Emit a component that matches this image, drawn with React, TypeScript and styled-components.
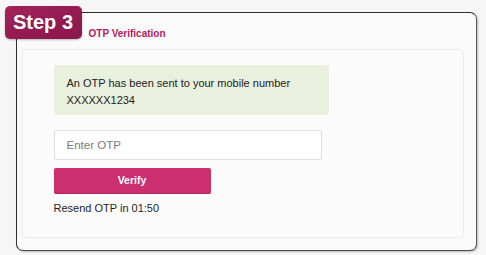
import React from "react";
import styled, { createGlobalStyle } from "styled-components";

const GlobalStyle = createGlobalStyle`
  html, body {
    margin: 0;
    padding: 0;
    background: #f6f6f6;
    font-family: "Liberation Sans", Arial, sans-serif;
  }
  * { box-sizing: border-box; }
`;

const Page = styled.div`
  width: 486px;
  height: 255px;
  overflow: hidden;
  display: flex;
  flex-direction: column;
`;

const TopStrip = styled.div`
  height: 12px;
  overflow: hidden;
`;

const CutTitle = styled.div`
  margin-top: -21px;
  font-size: 18px;
  line-height: 20px;
  font-weight: 700;
  color: #555;
  white-space: nowrap;
`;

const Frame = styled.section`
  position: relative;
  margin-left: 16px;
  width: 461px;
  height: 239px;
  border: 1.5px solid #2e2e2e;
  border-right-color: #5a5a5a;
  border-bottom-color: #4a4a4a;
  border-radius: 7px;
  background: #fafafa;
  box-shadow: 1px 1px 2px rgba(0, 0, 0, 0.25);
  display: flex;
  flex-direction: column;
  padding: 0 12.5px 12.5px 4.5px;
`;

const StepBadge = styled.div`
  position: absolute;
  left: -12.5px;
  top: -7.5px;
  width: 77px;
  height: 33px;
  border-radius: 5px;
  background: linear-gradient(160deg, #a3235b 0%, #921a50 60%, #8a174b 100%);
  box-shadow: 0 1px 2px rgba(0, 0, 0, 0.25);
  color: #ffffff;
  font-size: 20px;
  font-weight: 700;
  display: flex;
  align-items: center;
  justify-content: center;
`;

const Header = styled.div`
  height: 35.5px;
  padding: 15px 0 0 67px;
  font-size: 10px;
  line-height: 12px;
  font-weight: 700;
  color: #b41c5c;
`;

const Card = styled.div`
  flex: 1;
  border: 1px solid #ebebeb;
  border-radius: 4px;
  background: #fbfbfb;
  padding: 15px 0 0 31px;
  display: flex;
  flex-direction: column;
  align-items: flex-start;
`;

const Alert = styled.div`
  width: 275px;
  height: 50px;
  border-radius: 3px;
  background: #e9f0dd;
  padding: 10px 13px 0 13px;
  font-size: 11px;
  line-height: 17px;
  color: #222;
`;

const OtpInput = styled.input`
  margin-top: 15px;
  width: 268px;
  height: 30px;
  border: 1px solid #dedede;
  border-radius: 2px;
  background: #ffffff;
  padding: 0 12px;
  font-family: "Liberation Sans", Arial, sans-serif;
  font-size: 11.5px;
  color: #333;
  outline: none;
  &::placeholder {
    color: #7a7a7a;
  }
`;

const VerifyButton = styled.button`
  margin-top: 8px;
  width: 157px;
  height: 26px;
  border: none;
  border-bottom: 1px solid #b02560;
  border-radius: 2px;
  background: #cb2f6d;
  color: #ffffff;
  font-family: "Liberation Sans", Arial, sans-serif;
  font-size: 10.5px;
  font-weight: 700;
  cursor: pointer;
`;

const Resend = styled.div`
  margin-top: 8px;
  font-size: 11px;
  line-height: 13px;
  color: #1e1e1e;
`;

export default function App() {
  return (
    <>
      <GlobalStyle />
      <Page>
        <TopStrip>
          <CutTitle>Log in using OTP</CutTitle>
        </TopStrip>
        <Frame>
          <StepBadge>Step 3</StepBadge>
          <Header>OTP Verification</Header>
          <Card>
            <Alert>
              An OTP has been sent to your mobile number
              <br />
              XXXXXX1234
            </Alert>
            <OtpInput placeholder="Enter OTP" />
            <VerifyButton>Verify</VerifyButton>
            <Resend>Resend OTP in 01:50</Resend>
          </Card>
        </Frame>
      </Page>
    </>
  );
}
